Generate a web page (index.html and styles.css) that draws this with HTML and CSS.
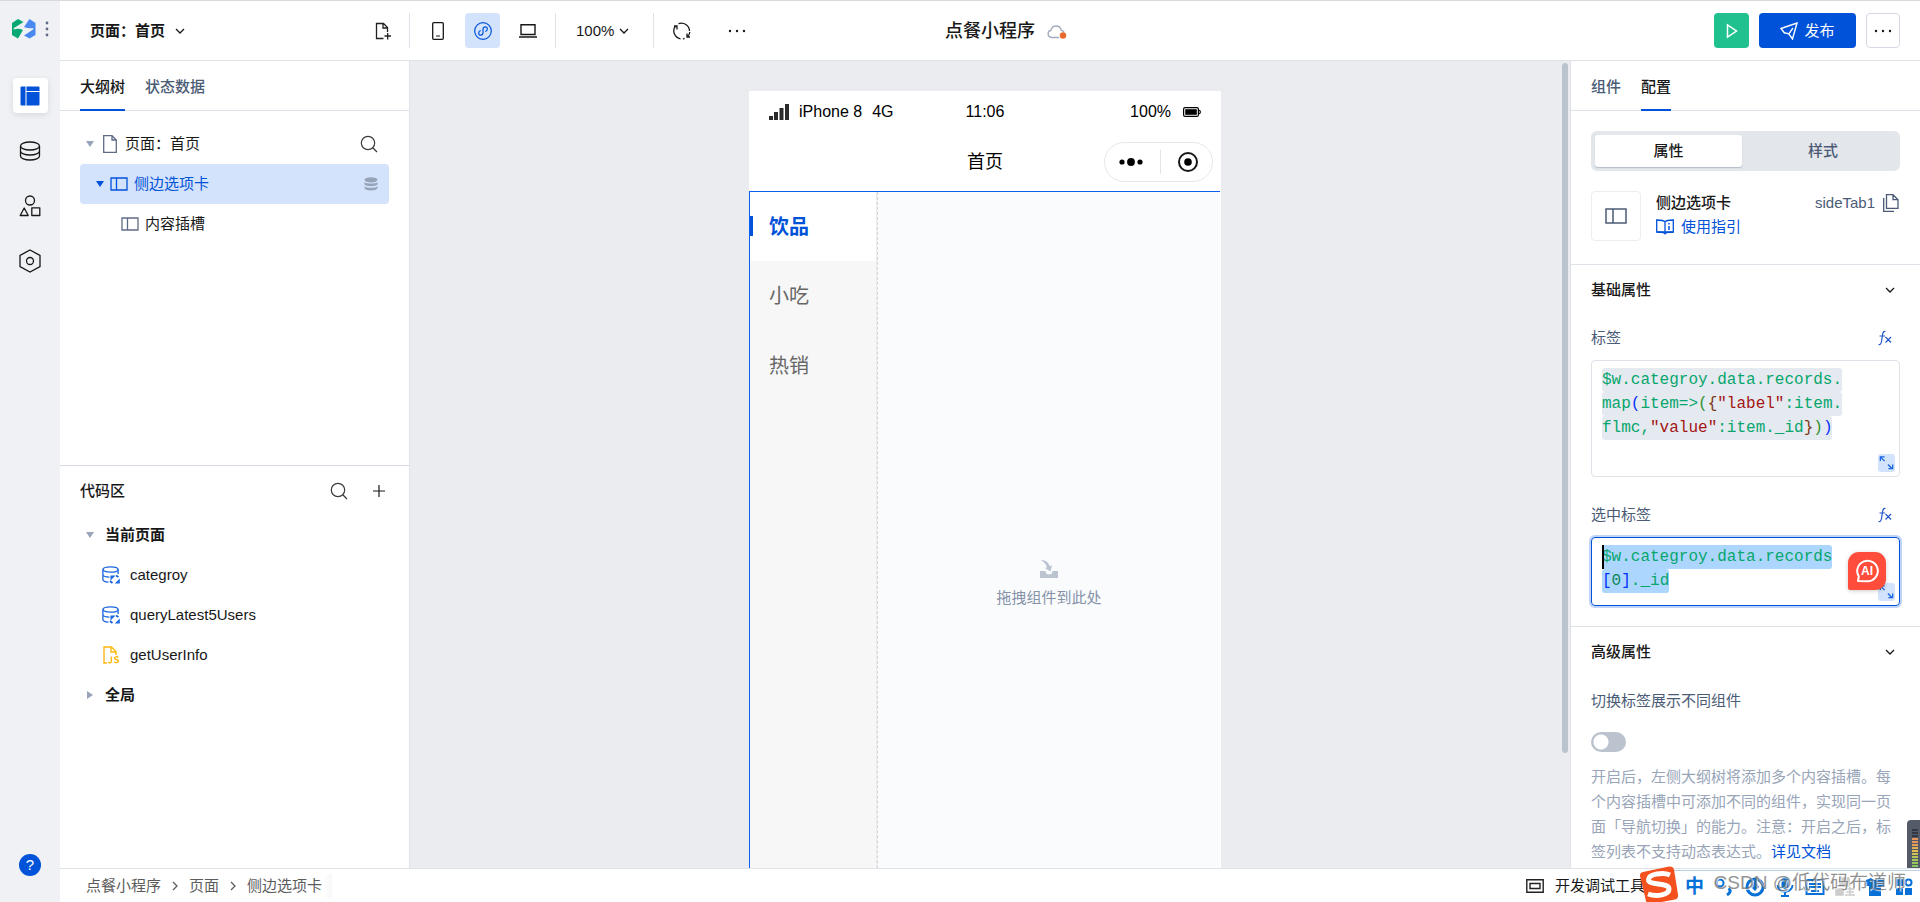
FILE: index.html
```html
<!DOCTYPE html>
<html lang="zh-CN">
<head>
<meta charset="utf-8">
<title>点餐小程序</title>
<link rel="stylesheet" href="styles.css">
</head>
<body>
<svg class="defs" aria-hidden="true">
  <symbol id="i-chevron" viewBox="0 0 10 10"><path d="M1 3l4 4 4-4" fill="none" stroke="currentColor" stroke-width="1.300"/></symbol>
  <symbol id="i-search" viewBox="0 0 18 18"><circle cx="8" cy="8" r="6.700" fill="none" stroke="currentColor" stroke-width="1.200"/><path d="M12.800 12.800L17 17" stroke="currentColor" stroke-width="1.300"/></symbol>
  <symbol id="i-down" viewBox="0 0 8 8"><path d="M0 1h8L4 7z" fill="currentColor"/></symbol>
  <symbol id="i-right" viewBox="0 0 8 8"><path d="M1 0l6 4-6 4z" fill="currentColor"/></symbol>
  <symbol id="i-tabs" viewBox="0 0 18 14"><path d="M1 1h16v12H1zM6.500 1v12" fill="none" stroke="currentColor" stroke-width="1.300"/></symbol>
  <symbol id="i-query" viewBox="0 0 18 18"><g fill="none" stroke="currentColor" stroke-width="1.300"><ellipse cx="8.500" cy="3.500" rx="7.600" ry="2.700"/><path d="M.9 3.500v10c0 1.300 2.600 2.500 5.600 2.700M16.100 3.500V8M.9 8.500c0 1.500 3 2.500 6.600 2.600"/></g><path d="M8.500 9.500h5L8.500 14.500zM17.800 17.500h-5l5-5z" fill="currentColor"/><path d="M14 9.500l2.500 1.500M8 15l2.500 2" stroke="currentColor" stroke-width="2"/></symbol>
  <symbol id="i-expand" viewBox="0 0 18 18"><path d="M2.500 7V2.500H7M2.500 2.500L7 7M10.500 10.500l4.500 4.500M15.500 10.500v4.500H11" fill="none" stroke="currentColor" stroke-width="1.400"/></symbol>
  <symbol id="i-fx" viewBox="0 0 16 18"><path d="M8.500 2.500C7 1.700 6 3 5.600 5.500L4.500 12.500C4 15 3 16 1.500 15.500M2.500 7h5.500M8.500 8l5.500 5.500M14 8l-5.500 5.500" fill="none" stroke="currentColor" stroke-width="1.200"/></symbol>
  <symbol id="i-dots" viewBox="0 0 18 4"><g fill="currentColor"><circle cx="2" cy="2" r="1.200"/><circle cx="9" cy="2" r="1.200"/><circle cx="16" cy="2" r="1.200"/></g></symbol>
</svg>

<div class="app">
  <aside class="rail">
    <div class="brand">
      <svg width="24" height="20" viewBox="0 0 24 20"><path d="M0 4L6 0l5.500 3L2 9q-1 1 0 1.500 4-1.500 9 .5L6 19.500 0 16z" fill="#07a872"/><path d="M12 8L17.500 0l6 4v12l-6 3.500-5.500-3 9-6q1-1 0-1.500-4 1-9-1z" fill="#4a89f0"/></svg>
      <svg width="4" height="16" viewBox="0 0 4 16"><g fill="#5f6b85"><circle cx="2" cy="2" r="1.400"/><circle cx="2" cy="8" r="1.400"/><circle cx="2" cy="14" r="1.400"/></g></svg>
    </div>
    <nav class="rail-nav">
      <button class="rail-btn is-active" aria-label="页面设计"><svg width="20" height="20" viewBox="0 0 20 20"><path d="M1.500.5h4v19h-4a1 1 0 01-1-1v-17a1 1 0 011-1zM6.500.5h12a1 1 0 011 1V5h-13zM6.500 6h13v12.500a1 1 0 01-1 1h-12z" fill="#0052d9"/></svg></button>
      <button class="rail-btn" aria-label="数据源"><svg width="22" height="20" viewBox="0 0 22 20"><g fill="none" stroke="#181818" stroke-width="1.300"><ellipse cx="11" cy="5" rx="9.500" ry="4"/><path d="M1.500 5v10c0 2.200 4.200 4 9.500 4s9.500-1.800 9.500-4V5M1.500 10c0 2.200 4.200 4 9.500 4s9.500-1.800 9.500-4"/></g></svg></button>
      <button class="rail-btn" aria-label="组件库"><svg width="22" height="22" viewBox="0 0 22 22"><g fill="none" stroke="#181818" stroke-width="1.300"><circle cx="11" cy="5.500" r="4.500"/><path d="M5.200 13L1.200 20.500h8zM12.800 12.800h8v7.700h-8z" stroke-linejoin="round"/></g></svg></button>
      <button class="rail-btn" aria-label="设置"><svg width="22" height="24" viewBox="0 0 22 24"><g fill="none" stroke="#181818" stroke-width="1.300"><path d="M11 1l10 5.500v11L11 23 1 17.500v-11z"/><circle cx="11" cy="12" r="3.500"/></g></svg></button>
    </nav>
    <button class="help" aria-label="帮助">?</button>
  </aside>

  <header class="topbar">
    <div class="tools">
      <div class="tool-group page-group">
        <button class="page-select">页面：首页 <svg width="10" height="10"><use href="#i-chevron"/></svg></button>
        <button class="icon-btn" aria-label="新建页面"><svg width="18" height="18" viewBox="0 0 18 18"><path d="M9.500 16.500h-7v-15h7l4 4V10M9 1.500v4.500h4.500M10.500 14H17M13.700 11v6.500" fill="none" stroke="#222" stroke-width="1.300"/></svg></button>
      </div>
      <div class="tool-group device-group">
        <button class="icon-btn" aria-label="手机"><svg width="12" height="18" viewBox="0 0 12 18"><rect x=".7" y=".7" width="10.600" height="16.600" rx="1" fill="none" stroke="#181818" stroke-width="1.300"/><path d="M4 14h4" stroke="#181818"/></svg></button>
        <button class="icon-btn is-active" aria-label="小程序"><svg width="18" height="18" viewBox="0 0 18 18"><g fill="none" stroke="#0052d9" stroke-width="1.200"><circle cx="9" cy="9" r="8.300"/><path d="M6.800 8.500C4 9 4 13.200 6.600 13.200 8.300 13.200 9 12 9 10.500v-3C9 6 9.700 4.800 11.400 4.800 14 4.800 14 9 11.200 9.500"/></g></svg></button>
        <button class="icon-btn" aria-label="电脑"><svg width="18" height="14" viewBox="0 0 18 14"><path d="M2 .8h14v9.700H2zM0 13h18" fill="none" stroke="#181818" stroke-width="1.400"/></svg></button>
      </div>
      <div class="tool-group zoom-group">
        <button class="zoom">100% <svg width="10" height="10"><use href="#i-chevron"/></svg></button>
      </div>
      <div class="tool-group more-group">
        <button class="icon-btn" aria-label="刷新"><svg width="20" height="18" viewBox="0 0 20 18"><path d="M3.500 4A8 8 0 008.500 16.800M2 4h3v3.500M6.500 1.700A8 8 0 0117.500 9M17.800 10A8 8 0 0115 15.300M11 16.900l1.500-.4M18 15h-3v-3.500" fill="none" stroke="#181818" stroke-width="1.300"/></svg></button>
        <button class="icon-btn" aria-label="更多"><svg width="18" height="4"><use href="#i-dots"/></svg></button>
      </div>
    </div>
    <h1 class="app-title">点餐小程序</h1>
    <div class="actions">
      <svg class="cloud" width="20" height="14" viewBox="0 0 20 14"><path d="M12 12.500H4.500a3.700 3.700 0 01-.5-7.300 5.200 5.200 0 0110.200 0c1.400.2 2.300 1 2.800 2" fill="none" stroke="#a3adbf" stroke-width="1.400"/><circle cx="16" cy="10.500" r="3.200" fill="#e8692d"/></svg>
      <button class="run" aria-label="预览"><svg width="12" height="16" viewBox="0 0 12 16"><path d="M1.500 2v12l9-6z" fill="none" stroke="#fff" stroke-width="1.500"/></svg></button>
      <button class="publish"><svg width="18" height="18" viewBox="0 0 18 18"><path d="M1 6.500L17 1l-4.500 16-3.700-5.200-4.500-1zM8.800 11.800L13 6" fill="none" stroke="#fff" stroke-width="1.400"/></svg>发布</button>
      <button class="more" aria-label="更多操作"><svg width="18" height="4"><use href="#i-dots"/></svg></button>
    </div>
  </header>

  <div class="workspace">
    <aside class="left-panel">
      <section class="outline">
        <div class="tabs" role="tablist">
          <button class="tab is-active" role="tab" aria-selected="true">大纲树</button>
          <button class="tab" role="tab" aria-selected="false">状态数据</button>
        </div>
        <ul class="tree">
          <li class="tree-row lv1"><svg class="caret" width="8" height="8"><use href="#i-down"/></svg><svg class="file-ico" width="14" height="18" viewBox="0 0 14 18"><path d="M.7.7H9l4.300 4.300v12.300H.7zM9 .7V5h4.300" fill="none" stroke="#5f6b85" stroke-width="1.300"/></svg><span class="grow">页面：首页</span><button class="plain" aria-label="搜索"><svg width="18" height="18"><use href="#i-search"/></svg></button></li>
          <li class="tree-row lv2 is-selected"><svg class="caret" width="8" height="8"><use href="#i-down"/></svg><svg width="18" height="14"><use href="#i-tabs"/></svg><span class="grow">侧边选项卡</span><svg width="14" height="14" viewBox="0 0 14 14"><g fill="#97a3b7"><ellipse cx="7" cy="2.800" rx="6.500" ry="2.600"/><path d="M.5 5c1.500 2 11.500 2 13 0v2.500c-1.500 2.300-11.500 2.300-13 0zM.5 9.300c1.500 2 11.500 2 13 0v2c-1.500 2.900-11.500 2.900-13 0z"/></g></svg></li>
          <li class="tree-row lv3"><svg class="slot-ico" width="18" height="14"><use href="#i-tabs"/></svg><span class="grow">内容插槽</span></li>
        </ul>
      </section>
      <section class="code-area">
        <div class="code-head"><h2>代码区</h2><button class="plain" aria-label="搜索代码"><svg width="18" height="18"><use href="#i-search"/></svg></button><button class="plain" aria-label="新建"><svg width="12" height="12" viewBox="0 0 12 12"><path d="M0 6h12M6 0v12" stroke="#181818" stroke-width="1.200"/></svg></button></div>
        <ul class="tree">
          <li class="tree-row group"><svg class="caret" width="8" height="8"><use href="#i-down"/></svg>当前页面</li>
          <li class="tree-row leaf"><svg class="blue" width="18" height="18"><use href="#i-query"/></svg>categroy</li>
          <li class="tree-row leaf"><svg class="blue" width="18" height="18"><use href="#i-query"/></svg>queryLatest5Users</li>
          <li class="tree-row leaf"><svg width="18" height="18" viewBox="0 0 18 18"><g fill="none" stroke="#fdb813" stroke-width="1.400"><path d="M5 17H2V1h7.500l4.500 4.500V9M9 1v5h5"/><path d="M9.300 10.500v5c0 1.500-2.200 1.700-3 .5M16.300 11.500c-1-1.200-4-.8-3.800.8s4 .8 4 2.700-3.300 2-4.300.7"/></g></svg>getUserInfo</li>
          <li class="tree-row group"><svg class="caret" width="8" height="8"><use href="#i-right"/></svg>全局</li>
        </ul>
      </section>
    </aside>

    <main class="canvas">
      <div class="phone">
        <div class="status">
          <div class="carrier"><svg width="20" height="16" viewBox="0 0 20 16"><g fill="#2b2b2b"><path d="M0 12h4v4H0zM5 8h4v8H5zM10.500 4h4v12h-4zM16 0h4v16h-4z"/></g></svg><span>iPhone 8</span><span>4G</span></div>
          <span>11:06</span>
          <div class="power"><span>100%</span><svg width="18" height="10" viewBox="0 0 18 10"><rect x=".6" y=".6" width="14.800" height="8.800" rx="1.500" fill="none" stroke="#000" stroke-width="1.200"/><path d="M2.200 2.200h11.600v5.600H2.200z"/><path d="M15.500 3c2.500.3 2.500 3.700 0 4" fill="none" stroke="#000" stroke-width="1.200"/></svg></div>
        </div>
        <div class="navbar">
          <span class="nav-title">首页</span>
          <div class="capsule">
            <svg width="24" height="8" viewBox="0 0 24 8"><circle cx="3" cy="4" r="2.600"/><circle cx="12" cy="4" r="3.900"/><circle cx="21" cy="4" r="2.600"/></svg>
            <i></i>
            <svg width="20" height="20" viewBox="0 0 20 20"><circle cx="10" cy="10" r="9" fill="none" stroke="#181818" stroke-width="2"/><circle cx="10" cy="10" r="3.800"/></svg>
          </div>
        </div>
        <div class="side-tab">
          <div class="side-list">
            <button class="side-item is-active">饮品</button>
            <button class="side-item">小吃</button>
            <button class="side-item">热销</button>
          </div>
          <div class="slot">
            <svg width="18" height="18" viewBox="0 0 18 18"><g fill="#bbc3d1"><path d="M0 11h5.500a3.500 3.500 0 007 0H18v7H0z"/><path d="M1 0c4 0 7.500 2 8.500 6l2.500-.5-1.500 6L5 8l2-.8C6 4 4 2 1 0z"/></g></svg>
            <span>拖拽组件到此处</span>
          </div>
        </div>
      </div>
      <div class="scroll"><i></i></div>
    </main>

    <aside class="right-panel">
      <div class="tabs" role="tablist">
        <button class="tab" role="tab" aria-selected="false">组件</button>
        <button class="tab is-active" role="tab" aria-selected="true">配置</button>
      </div>
      <div class="block">
        <div class="segment"><button class="is-active">属性</button><button>样式</button></div>
        <div class="component">
          <div class="thumb"><svg width="22" height="16" viewBox="0 0 22 16"><path d="M1 1h20v14H1zM8 1v14" fill="none" stroke="#4b5b76" stroke-width="1.500"/></svg></div>
          <div class="component-name"><strong>侧边选项卡</strong><a href="#guide"><svg width="18" height="16" viewBox="0 0 18 16"><path d="M9 3C8 1.200 4 1 .7 1v12C5 13 8 13 9 14.800 10 13 13 13 17.300 13V1C14 1 10 1.200 9 3zM9 3v11" fill="none" stroke="#0052d9" stroke-width="1.300"/><path d="M.7 13h16.600M13 4v1.500M13 7v4" stroke="#0052d9" stroke-width="1.500"/></svg>使用指引</a></div>
          <div class="component-id">sideTab1<svg width="16" height="18" viewBox="0 0 16 18"><path d="M3.500.7H10l5 5v8.600H3.500zM10 .7v5h5M.7 4v13.300H11" fill="none" stroke="#4b5b76" stroke-width="1.300"/></svg></div>
        </div>
      </div>
      <section class="props">
        <h3>基础属性<svg width="10" height="10"><use href="#i-chevron"/></svg></h3>
        <div class="field-label"><span id="l1">标签</span><button class="plain fx" aria-label="表达式"><svg width="16" height="18"><use href="#i-fx"/></svg></button></div>
        <div class="editor tall">
          <div class="code" contenteditable="true" spellcheck="false" role="textbox" aria-multiline="true" aria-labelledby="l1"><span class="hl">$w.categroy.data.records.</span><br><span class="hl">map<b class="p1">(</b>item=&gt;<b class="p2">(</b><b class="p3">{</b><b class="str">"label"</b>:item.</span><br><span class="hl">flmc,<b class="str">"value"</b>:item._id<b class="p3">}</b><b class="p2">)</b><b class="p1">)</b></span></div>
          <button class="expand" aria-label="展开"><svg width="17" height="18" viewBox="0 0 18 18"><use href="#i-expand"/></svg></button>
        </div>
        <div class="field-label second"><span id="l2">选中标签</span><button class="plain fx" aria-label="表达式"><svg width="16" height="18"><use href="#i-fx"/></svg></button></div>
        <div class="editor is-focus">
          <div class="code" contenteditable="true" spellcheck="false" role="textbox" aria-multiline="true" aria-labelledby="l2"><i class="cursor"></i><span class="hl">$w.categroy.data.records</span><br><span class="hl"><b class="p1">[</b><b class="num">0</b><b class="p1">]</b>._id</span></div>
          <button class="expand" aria-label="展开"><svg width="17" height="18" viewBox="0 0 18 18"><use href="#i-expand"/></svg></button>
          <button class="ai" aria-label="AI 助手"><svg width="24" height="24" viewBox="0 0 24 24"><path d="M3 22l.8-4.500A10.300 10.300 0 1112 22.300z" fill="none" stroke="#fff" stroke-width="2" stroke-linejoin="round"/></svg><span>AI</span></button>
        </div>
      </section>
      <section class="props">
        <h3>高级属性<svg width="10" height="10"><use href="#i-chevron"/></svg></h3>
        <label class="field-label switch-label" for="multi">切换标签展示不同组件</label>
        <input class="switch" id="multi" type="checkbox" role="switch">
        <p class="hint">开启后，左侧大纲树将添加多个内容插槽。每个内容插槽中可添加不同的组件，实现同一页面「导航切换」的能力。注意：开启之后，标签列表不支持动态表达式。<a href="#doc">详见文档</a></p>
      </section>
      <div class="meter"><i></i></div>
    </aside>
  </div>

  <footer class="bottombar">
    <nav class="crumbs"><a href="#app">点餐小程序</a><svg width="10" height="10"><use href="#i-chevron"/></svg><a href="#pages">页面</a><svg width="10" height="10"><use href="#i-chevron"/></svg><a class="current" href="#tab">侧边选项卡</a></nav>
    <button class="devtools"><svg width="18" height="14" viewBox="0 0 18 14"><path d="M.8.8h16.400v12.400H.8zM4 4.500h10v5H4z" fill="none" stroke="#222" stroke-width="1.400"/></svg>开发调试工具</button>
    <div class="ime">
      <svg class="sogou" width="40" height="38" viewBox="0 0 40 38"><path d="M4 6L30 .5q4-.5 5 3l4 25q.5 4-3 5L12 38q-4 .5-5-3L1 10q-.5-3 3-4z" fill="#f4511e"/><path d="M31 9C24 6 10 8 9.500 13.500 9 20 30 16 30 23c0 6-12 8-21 5" fill="none" stroke="#fff" stroke-width="5"/></svg>
      <span class="zh">中</span>
      <svg width="20" height="20" viewBox="0 0 20 20"><circle cx="5" cy="6" r="3.500" fill="none" stroke="#0871d8" stroke-width="2"/><path d="M14 11q3 4-2 7" fill="none" stroke="#0871d8" stroke-width="3"/></svg>
      <svg width="20" height="20" viewBox="0 0 20 20"><circle cx="10" cy="10" r="8" fill="none" stroke="#0871d8" stroke-width="3"/><path d="M10 2l4 8-4 4-4-4z" fill="#0871d8"/></svg>
      <svg width="20" height="20" viewBox="0 0 20 20"><rect x="6.500" y="0" width="7" height="12" rx="3.500" fill="#0871d8"/><path d="M2.500 8c0 9 15 9 15 0M10 15v4M6 19h8" fill="none" stroke="#0871d8" stroke-width="2"/></svg>
      <svg width="20" height="20" viewBox="0 0 20 20"><path d="M1.500 3h17v14h-17zM4 7h12M4 10h12M6 14h8" fill="none" stroke="#0871d8" stroke-width="2"/></svg>
      <svg width="20" height="20" viewBox="0 0 20 20"><path d="M5 1h9v8H5zM1 12h7v6H1zM11 12h8M11 15h8M10 18h10M15 10v8" fill="#ccc" stroke="#ccc" stroke-width="1.500"/></svg>
      <svg width="20" height="20" viewBox="0 0 20 20"><path d="M1 3l5-2q4 4 8 0l5 2v6h-3v10H4V9H1z" fill="#0871d8"/></svg>
      <svg width="18" height="20" viewBox="0 0 18 20"><circle cx="13.500" cy="5.500" r="3" fill="none" stroke="#0871d8" stroke-width="2"/><path d="M1 2h7v7H1zM1 11h7v7H1zM10 11h7v7h-7z" fill="#0871d8"/></svg>
      <span class="watermark">CSDN @低代码布道师</span>
    </div>
  </footer>
</div>
</body>
</html>
```
FILE: styles.css
```css
* { box-sizing: border-box; }
body {
  margin: 0;
  font: 15px/24px "Liberation Sans", "Noto Sans CJK SC", sans-serif;
  color: #181818;
  background: #fff;
}
button {
  padding: 0;
  border: 0;
  background: none;
  font: inherit;
  color: inherit;
  display: inline-flex;
  align-items: center;
  justify-content: center;
  flex: none;
}
a { color: #0052d9; text-decoration: none; }
ul { list-style: none; margin: 0; padding: 0; }
h1, h2, h3, p { margin: 0; }
svg { flex: none; display: block; }
.defs { position: absolute; width: 0; height: 0; }

.app {
  height: 100vh;
  display: grid;
  grid-template: 60px minmax(0, 1fr) 34px / 60px minmax(0, 1fr);
  border-top: 1px solid #d9d9dc;
  overflow: hidden;
}

/* rail */
.rail {
  grid-row: 1 / 4;
  background: #f0f1f5;
  display: flex;
  flex-direction: column;
  align-items: center;
  padding-bottom: 26px;
}
.brand {
  height: 55px;
  width: 100%;
  padding-left: 12px;
  display: flex;
  align-items: center;
  gap: 9px;
}
.rail-nav { display: flex; flex-direction: column; gap: 20px; padding-top: 22px; }
.rail-btn { width: 35px; height: 35px; border-radius: 4px; }
.rail-btn.is-active { background: #fff; box-shadow: 0 2px 6px rgba(0, 0, 0, .1); }
.help {
  margin-top: auto;
  width: 22px;
  height: 22px;
  border-radius: 50%;
  background: #0052d9;
  color: #fff;
}

/* top bar */
.topbar { display: flex; align-items: center; border-bottom: 1px solid #dfe2e9; }
.tools { flex: 1 1 0; display: flex; padding-left: 20px; }
.tool-group {
  height: 35px;
  display: flex;
  align-items: center;
  border-right: 1px solid #dfe2e9;
}
.page-group { width: 330px; padding: 0 9px 0 10px; justify-content: space-between; }
.page-select { font-weight: 600; gap: 10px; }
.device-group { padding: 0 10px; gap: 10px; }
.zoom-group { padding: 0 24px 0 20px; }
.zoom { gap: 5px; }
.more-group { border: 0; padding-left: 10px; gap: 20px; }
.icon-btn { width: 35px; height: 35px; border-radius: 4px; }
.icon-btn.is-active { background: #d4e3fc; }
.app-title { font-size: 18px; font-weight: 500; }
.actions { flex: 1 1 0; display: flex; align-items: center; padding-right: 20px; }
.cloud { margin: 2px auto 0 12px; }
.run { width: 35px; height: 35px; border-radius: 4px; background: #20c18f; }
.publish {
  width: 97px;
  height: 35px;
  margin: 0 10px;
  gap: 6px;
  border-radius: 4px;
  background: #0052d9;
  color: #fff;
}
.more { width: 34px; height: 35px; border: 1px solid #d5d9e3; border-radius: 4px; }

/* workspace */
.workspace { display: flex; min-height: 0; }
.left-panel {
  flex: none;
  width: 350px;
  display: flex;
  flex-direction: column;
  border-right: 1px solid #dfe2e9;
}
.outline { flex: 405 1 0; }
.code-area { flex: 403 1 0; border-top: 1px solid #d5d9e5; }
.tabs {
  height: 50px;
  padding: 0 20px;
  display: flex;
  gap: 20px;
  border-bottom: 1px solid #dfe2e9;
}
.tab {
  height: 50px;
  padding-top: 3px;
  font-weight: 500;
  color: #4b5b76;
  border-bottom: 2px solid transparent;
}
.tab.is-active { color: #181818; border-color: #0052d9; }
.tree-row { height: 40px; display: flex; align-items: center; padding-right: 11px; border-radius: 4px; }
.outline .tree { padding: 13px 20px; }
.grow { flex: 1; }
.plain { color: #3b3b3b; }
.caret { color: #98a4b8; }
.lv1 { padding-left: 6px; }
.file-ico { margin: 0 8px 0 9px; }
.lv2 { padding-left: 16px; gap: 6px; }
.lv2.is-selected { background: #d4e3fc; color: #0052d9; }
.is-selected .caret { color: #0052d9; }
.lv3 { padding-left: 41px; gap: 6px; }
.slot-ico { color: #5f6b85; }
.code-head { height: 49px; padding: 0 24px 0 20px; display: flex; align-items: center; gap: 25px; }
.code-head h2 { flex: 1; font-size: 15px; font-weight: 500; }
.group { padding-left: 26px; gap: 11px; font-weight: 600; }
.leaf { padding-left: 42px; gap: 10px; }
.blue { color: #1a66e0; }

/* canvas */
.canvas {
  flex: 1 1 0;
  min-width: 0;
  display: flex;
  background: #ebecf0;
  overflow: hidden;
}
.phone { width: 472px; margin: 30px auto 0; background: #fff; align-self: flex-start; }
.status {
  height: 42px;
  padding: 0 20px;
  display: grid;
  grid-template-columns: 1fr auto 1fr;
  align-items: center;
  font-size: 16px;
  color: #000;
}
.carrier { display: flex; align-items: center; gap: 10px; }
.power { display: flex; align-items: center; justify-content: flex-end; gap: 12px; }
.navbar {
  height: 58px;
  padding: 0 8px;
  display: grid;
  grid-template-columns: 1fr auto 1fr;
  align-items: center;
}
.nav-title { grid-column: 2; font-size: 18px; color: #000; }
.capsule {
  justify-self: end;
  width: 109px;
  height: 40px;
  padding: 0 14px;
  display: flex;
  align-items: center;
  justify-content: space-between;
  border: 1px solid #e6e7ec;
  border-radius: 20px;
}
.capsule i { width: 1px; height: 24px; background: #e3e4ea; }
.side-tab {
  display: flex;
  min-height: 787px;
  margin-right: 1px;
  border-top: 1px solid #0a5ff0;
  border-left: 1px solid #0a5ff0;
}
.side-list { width: 127px; background: #f7f7f7; border-right: 1px solid #ececec; }
.side-item {
  position: relative;
  width: 100%;
  height: 70px;
  padding-left: 19px;
  justify-content: flex-start;
  font-size: 20px;
  color: #666;
}
.side-item.is-active { height: 69px; background: #fff; color: #0052d9; font-weight: 700; }
.side-item.is-active::before {
  content: "";
  position: absolute;
  left: 0;
  top: 24px;
  width: 3px;
  height: 20px;
  background: #0052d9;
}
.slot {
  flex: 1;
  display: flex;
  flex-direction: column;
  align-items: center;
  justify-content: center;
  gap: 8px;
  background: #fafbfd;
  border-left: 1px dashed #d4d4d4;
  color: #8592a8;
}
.scroll { flex: none; width: 10px; padding: 2px; }
.scroll i { display: block; height: 690px; border-radius: 3px; background: #bbc3cf; }

/* right panel */
.right-panel {
  position: relative;
  flex: none;
  width: 350px;
  border-left: 1px solid #dfe2e9;
  overflow: hidden;
}
.block { padding: 20px 20px 23px; }
.segment {
  height: 40px;
  padding: 4px;
  display: flex;
  gap: 8px;
  border-radius: 6px;
  background: #e3e6ea;
}
.segment button { flex: 1; border-radius: 3px; font-weight: 500; color: #4b5b76; }
.segment .is-active { flex: 0 0 147px; background: #fff; color: #181818; box-shadow: 0 1px 1px #b5bdc9; }
.component { display: flex; align-items: flex-start; margin-top: 20px; }
.thumb {
  width: 50px;
  height: 50px;
  margin-right: 15px;
  display: flex;
  align-items: center;
  justify-content: center;
  border: 1px solid #eceef2;
  border-radius: 4px;
}
.component-name { flex: 1; display: flex; flex-direction: column; }
.component-name strong { font-weight: 500; }
.component-name a { display: flex; align-items: center; gap: 7px; }
.component-id { display: flex; align-items: center; gap: 8px; color: #4b5b76; padding-right: 1px; }
.props { border-top: 1px solid #dfe2e9; padding: 0 20px 20px; }
.props h3 {
  height: 50px;
  padding-right: 5px;
  display: flex;
  align-items: center;
  justify-content: space-between;
  font-size: 15px;
  font-weight: 500;
}
.field-label {
  height: 45px;
  padding-right: 7px;
  display: flex;
  align-items: center;
  justify-content: space-between;
  color: #4b5b76;
}
.field-label.second { height: 60px; padding-top: 15px; }
.field-label.switch-label { height: 47px; }
.fx { color: #2156cf; }
.editor {
  position: relative;
  min-height: 69px;
  padding: 7px 10px;
  border: 1px solid #dfe2e9;
  border-radius: 4px;
}
.editor.tall { min-height: 117px; }
.editor.is-focus { border-color: #0052d9; box-shadow: 0 0 0 2px #bfd4f8; }
.code { font: 16px/24px "Liberation Mono", monospace; color: #07a66c; outline: none; white-space: nowrap; }
.code b { font-weight: 400; }
.hl { display: inline-block; background: #e5e9f0; border-radius: 3px; }
.is-focus .hl { background: #add6ff; }
.p1 { color: #0431fa; }
.p2 { color: #319331; }
.p3 { color: #7b3814; }
.str { color: #a31515; }
.num { color: #098658; }
.cursor { position: absolute; width: 2px; height: 24px; background: #000; }
.expand {
  position: absolute;
  right: 4px;
  bottom: 4px;
  width: 17px;
  height: 18px;
  border-radius: 3px;
  background: #d4e3fc;
  color: #1a66e0;
}
.ai {
  position: absolute;
  right: 13px;
  bottom: 15px;
  width: 38px;
  height: 38px;
  border-radius: 11px 11px 11px 2px;
  background: #ff4c3b;
  box-shadow: 0 1px 4px rgba(0, 0, 0, .2);
  color: #fff;
  display: grid;
  place-items: center;
  place-content: center;
}
.ai > * { grid-area: 1 / 1; }
.ai span { font-size: 12px; font-weight: 700; }
.switch {
  appearance: none;
  display: block;
  width: 35px;
  height: 20px;
  margin: 8px 0 12px;
  border-radius: 10px;
  background: radial-gradient(circle at 10px 10px, #fff 7px, transparent 8px), #bbc3cf;
}
.hint { line-height: 25px; color: #98a4b8; }
.meter {
  position: absolute;
  right: 0;
  bottom: 0;
  width: 13px;
  height: 48px;
  padding: 9px 2px 0 5px;
  background: #555a69;
  border-radius: 4px 0 0 0;
}
.meter i {
  display: block;
  height: 39px;
  background:
    repeating-linear-gradient(transparent 0 2px, #555a69 2px 3px),
    linear-gradient(#333845 0 9px, #e8955a 9px 14px, #e3c04c 22px, #a9c85a 30px, #7fc45b);
}

/* bottom bar */
.bottombar {
  position: relative;
  display: flex;
  align-items: center;
  justify-content: space-between;
  padding: 0 275px 0 26px;
  border-top: 1px solid #dfe2e9;
}
.crumbs { display: flex; align-items: center; gap: 9px; }
.crumbs a { color: #5c5c5c; }
.crumbs svg { transform: rotate(-90deg); color: #5c5c5c; }
.crumbs .current { padding-right: 10px; background: linear-gradient(90deg, #fff 90%, #f6f7f9); }
.devtools { gap: 11px; }
.ime {
  position: absolute;
  right: 0;
  top: 1px;
  bottom: 0;
  width: 268px;
  padding: 0 7px 0 33px;
  display: flex;
  align-items: center;
  justify-content: space-between;
  background: #fff;
  border-top: 1px solid #b9cfe4;
}
.sogou { position: absolute; left: -13px; bottom: -2px; }
.zh { width: 20px; font-size: 19px; font-weight: 700; color: #0871d8; }
.watermark {
  position: absolute;
  right: 14px;
  top: 0;
  font-size: 19px;
  color: rgba(110, 110, 110, .75);
  text-shadow: 1px 1px 0 rgba(255, 255, 255, .7);
  white-space: nowrap;
}
```
